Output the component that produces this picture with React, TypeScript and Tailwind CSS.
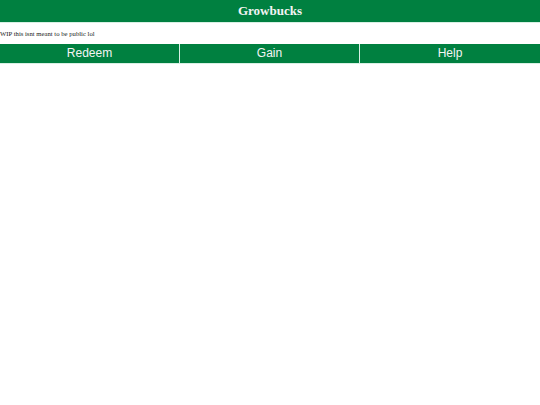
import React from 'react';

const tabs = ['Redeem', 'Gain', 'Help'];

export default function App() {
  return (
    <div className="min-h-[405px] w-full bg-white">
      {/* Title bar */}
      <div className="h-[22px] border-b border-[#d8f0e4] bg-[#008040] box-content">
        <h1 className="text-center text-[13px] font-bold leading-[22px] text-[#f4f4f4] [font-family:'Liberation_Serif',serif]">
          Growbucks
        </h1>
      </div>

      <p className="h-[21px] text-[6.7px] leading-[21px] text-[#222] [font-family:'Liberation_Serif',serif]">
        WIP this isnt meant to be public lol
      </p>

      {/* Nav */}
      <div className="grid h-[19px] grid-cols-3 border-b border-[#d8f0e4] bg-[#008040] box-content">
        {tabs.map((tab, i) => (
          <button
            key={tab}
            className={`text-center text-[12px] leading-[19px] text-[#f4f4f4] [font-family:'Liberation_Sans',sans-serif] ${
              i < 2 ? 'border-r border-[#d8f0e4]' : ''
            }`}
          >
            {tab}
          </button>
        ))}
      </div>
    </div>
  );
}
